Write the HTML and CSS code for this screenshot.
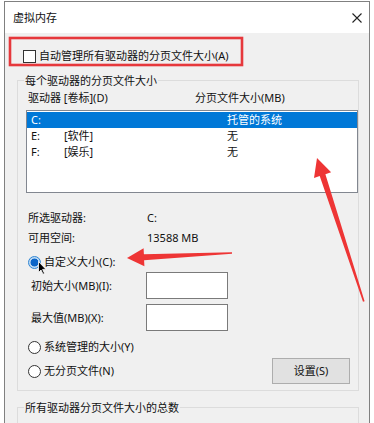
FILE: index.html
```html
<!DOCTYPE html>
<html lang="zh-CN">
<head>
<meta charset="utf-8">
<title>虚拟内存</title>
<link rel="stylesheet" href="styles.css">
</head>
<body>
<div class="window">
  <div class="titlebar">
    <span class="title">虚拟内存</span>
    <svg class="close" width="10" height="10" viewBox="0 0 10 10"><path d="M0.5 0.5L9.5 9.5M9.5 0.5L0.5 9.5" stroke="#222" stroke-width="1.1" fill="none"/></svg>
  </div>
  <div class="content">
    <div class="auto-row">
      <span class="checkbox"></span>
      <span>自动管理所有驱动器的分页文件大小(A)</span>
    </div>
    <div class="group">
      <div class="group-title">每个驱动器的分页文件大小</div>
      <div class="list-header">
        <span class="col-drive">驱动器 [卷标](D)</span>
        <span>分页文件大小(MB)</span>
      </div>
      <div class="listbox">
        <div class="list-row selected"><span>C:</span><span></span><span>托管的系统</span></div>
        <div class="list-row"><span>E:</span><span>[软件]</span><span>无</span></div>
        <div class="list-row"><span>F:</span><span>[娱乐]</span><span>无</span></div>
      </div>
      <div class="info-row"><span class="info-label">所选驱动器:</span><span>C:</span></div>
      <div class="info-row second"><span class="info-label">可用空间:</span><span>13588 MB</span></div>
      <div class="radio-row custom"><span class="radio checked"></span><span>自定义大小(C):</span></div>
      <div class="field-row first"><span class="field-label">初始大小(MB)(I):</span><span class="textbox"></span></div>
      <div class="field-row"><span class="field-label">最大值(MB)(X):</span><span class="textbox"></span></div>
      <div class="radio-row system"><span class="radio"></span><span>系统管理的大小(Y)</span></div>
      <div class="radio-row none"><span class="radio"></span><span>无分页文件(N)</span><button class="btn">设置(S)</button></div>
    </div>
    <div class="group group-total">
      <div class="group-title">所有驱动器分页文件大小的总数</div>
    </div>
  </div>
</div>
<svg class="annotations" width="374" height="423" viewBox="0 0 374 423">
  <rect x="10" y="38" width="232" height="27" fill="none" stroke="#e6383c" stroke-width="2.6"/>
  <polygon fill="#ee3535" points="317,158 331.1,172.3 325.4,174.2 364.6,301.3 363,301.7 319.7,176 314,177.9"/>
  <polygon fill="#ee3535" points="127,258 143.6,248.2 143.9,254.2 232,252.2 232,253.8 144.1,260.2 144.4,266.2"/>
  <path d="M38.5 261.5 L38.5 272.5 L41 270 L43 274.2 L44.6 273.5 L42.6 269.4 L46 269.4 Z" fill="#000" stroke="#fff" stroke-width="0.8"/>
</svg>
</body>
</html>
```
FILE: styles.css
```css
html, body {
  margin: 0;
  height: 423px;
  overflow: hidden;
  background: #fff;
}

body {
  position: relative;
  font-family: "Noto Sans", "Noto Sans CJK SC", sans-serif;
  font-size: 11px;
  line-height: 16px;
  color: #111;
}

.window {
  margin: 1px 0 0 4px;
  width: 364px;
  height: 421px;
  overflow: hidden;
  border: 1px solid #808080;
  border-bottom: none;
  background: #f0f0f0;
}

.titlebar {
  height: 31px;
  background: #fff;
  display: flex;
  align-items: center;
  justify-content: space-between;
  padding: 0 7px 0 8px;
}

.close {
  display: block;
}

.content {
  padding-top: 15px;
}

.auto-row {
  display: flex;
  align-items: center;
  gap: 3px;
  height: 16px;
  padding-left: 18px;
}

.checkbox {
  width: 13px;
  height: 13px;
  box-sizing: border-box;
  border: 1px solid #333;
  background: #fff;
}

.group {
  margin: 16px 10px 0 12px;
  border: 1px solid #dcdcdc;
  padding-bottom: 6px;
}

.group-title {
  width: fit-content;
  margin: -8px 0 0 6px;
  padding: 0 1px;
  background: #f0f0f0;
  line-height: 15px;
}

.list-header {
  display: flex;
  margin-top: 3px;
  padding-left: 10px;
  height: 14px;
  line-height: 14px;
}

.col-drive {
  width: 167px;
}

.listbox {
  margin: 5px 0 0 8px;
  height: 83px;
  box-sizing: border-box;
  border: 1px solid #828790;
  background: #fff;
  padding: 1px 0;
}

.list-row {
  display: grid;
  grid-template-columns: 33px 163px 1fr;
  height: 16px;
  line-height: 16px;
  padding-left: 4px;
}

.list-row.selected {
  background: #0078d7;
  color: #fff;
}

.info-row {
  display: flex;
  height: 16px;
  padding-left: 10px;
  margin-top: 17px;
}

.info-row.second {
  margin-top: 4px;
}

.info-label {
  width: 119px;
}

.radio-row {
  display: flex;
  align-items: center;
  gap: 3px;
  height: 16px;
  padding-left: 10px;
}

.radio-row.custom {
  margin-top: 8px;
}

.radio-row.system {
  margin-top: 8px;
}

.radio-row.none {
  height: 26px;
  margin-top: 3px;
}

.radio {
  width: 13px;
  height: 13px;
  box-sizing: border-box;
  border-radius: 50%;
  border: 1px solid #333;
  background: #fff;
}

.radio.checked {
  border-color: #2f86d4;
  background: radial-gradient(circle, #0a64c8 0 3.6px, #bcd9f3 4.3px);
}

.field-row {
  display: flex;
  align-items: center;
  height: 27px;
  padding-left: 13px;
  margin-top: 5px;
}

.field-row.first {
  margin-top: 2px;
}

.field-label {
  width: 115px;
}

.textbox {
  width: 82px;
  height: 27px;
  box-sizing: border-box;
  border: 1px solid #7a7a7a;
  background: #fff;
}

.btn {
  margin: 0 8px 0 auto;
  width: 78px;
  height: 26px;
  box-sizing: border-box;
  border: 1px solid #adadad;
  background: #e1e1e1;
  font: inherit;
  color: #111;
  padding: 0;
}

.group-total {
  margin-top: 16px;
  height: 30px;
}

.annotations {
  position: absolute;
  top: 0;
  left: 0;
  pointer-events: none;
}
```
